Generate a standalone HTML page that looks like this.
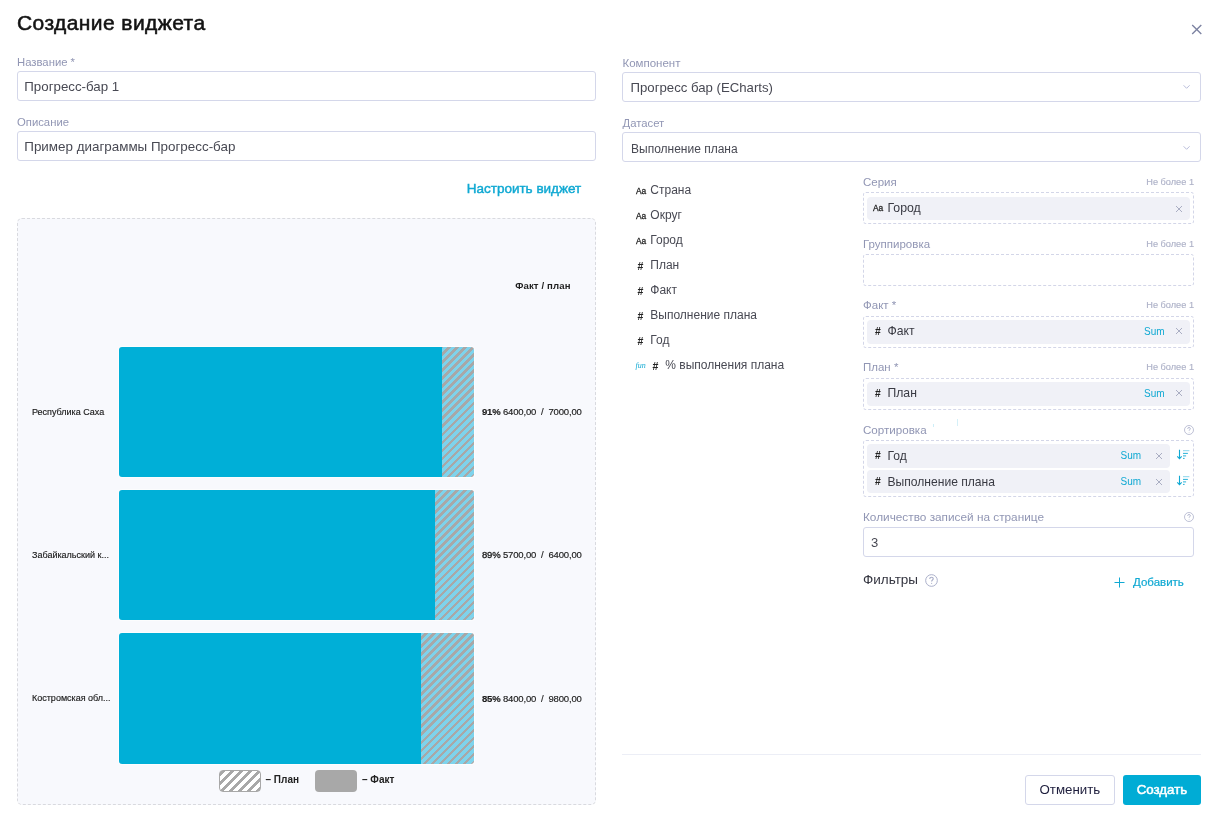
<!DOCTYPE html>
<html><head><meta charset="utf-8"><style>
html,body{margin:0;padding:0;width:1223px;height:815px;overflow:hidden;background:#fff}
body{position:relative;will-change:transform;font-family:"Liberation Sans",sans-serif}
.t{position:absolute;white-space:nowrap}
.r{position:absolute}
.bar{border-radius:3px;overflow:hidden;box-shadow:0 0 0 1px rgba(255,255,255,.6)}
</style></head><body>
<div class="t " style="left:17px;top:12.22px;font-size:21px;line-height:21px;font-weight:400;color:#131313;letter-spacing:0.42px;-webkit-text-stroke:0.55px #131313">Создание виджета</div>
<svg class="r" style="left:1189px;top:22px" width="16" height="16" viewBox="0 0 16 16"><path d="M3.2 3.0 L12.3 12.1 M12.3 3.0 L3.2 12.1" stroke="#7c82a1" stroke-width="1.35" fill="none"/></svg>
<div class="t " style="left:17px;top:56.73px;font-size:11.3px;line-height:11.3px;font-weight:400;color:#9196b4;">Название *</div>
<div class="r" style="left:17px;top:71px;width:579px;height:30px;border:1px solid #d4d7ea;border-radius:3px;box-sizing:border-box"></div>
<div class="t " style="left:24.3px;top:79.84px;font-size:13.3px;line-height:13.3px;font-weight:400;color:#484953;">Прогресс-бар 1</div>
<div class="t " style="left:17px;top:117.03px;font-size:11.3px;line-height:11.3px;font-weight:400;color:#9196b4;">Описание</div>
<div class="r" style="left:17px;top:131px;width:579px;height:30px;border:1px solid #d4d7ea;border-radius:3px;box-sizing:border-box"></div>
<div class="t " style="left:24.3px;top:139.96px;font-size:13.4px;line-height:13.4px;font-weight:400;color:#484953;">Пример диаграммы Прогресс-бар</div>
<div class="t " style="left:466.7px;top:181.87px;font-size:13.5px;line-height:13.5px;font-weight:400;color:#10a9d3;-webkit-text-stroke:0.45px #10a9d3">Настроить виджет</div>
<div class="t " style="left:622.5px;top:57.67px;font-size:11.5px;line-height:11.5px;font-weight:400;color:#9196b4;">Компонент</div>
<div class="r" style="left:622px;top:72px;width:579px;height:30px;border:1px solid #d4d7ea;border-radius:3px;box-sizing:border-box"></div>
<div class="t " style="left:630.5px;top:81.03px;font-size:13.2px;line-height:13.2px;font-weight:400;color:#484953;">Прогресс бар (ECharts)</div>
<svg class="r" style="left:1182px;top:83px" width="10" height="7" viewBox="0 0 10 7"><path d="M1.6 2.3 L4.6 5.3 L7.6 2.3" stroke="#b9bddb" stroke-width="1" fill="none"/></svg>
<div class="t " style="left:622.5px;top:117.83px;font-size:11.3px;line-height:11.3px;font-weight:400;color:#9196b4;">Датасет</div>
<div class="r" style="left:622px;top:132px;width:579px;height:30px;border:1px solid #d4d7ea;border-radius:3px;box-sizing:border-box"></div>
<div class="t " style="left:631px;top:142.64px;font-size:12px;line-height:12px;font-weight:400;color:#484953;">Выполнение плана</div>
<svg class="r" style="left:1182px;top:144px" width="10" height="7" viewBox="0 0 10 7"><path d="M1.6 2.3 L4.6 5.3 L7.6 2.3" stroke="#b9bddb" stroke-width="1" fill="none"/></svg>
<div class="t " style="left:636px;top:185.97px;font-size:9.6px;line-height:9.6px;font-weight:400;color:#222;transform:scaleX(0.87);transform-origin:0 0;-webkit-text-stroke:0.3px #222">Aa</div>
<div class="t " style="left:650.3px;top:183.84px;font-size:12px;line-height:12px;font-weight:400;color:#484953;">Страна</div>
<div class="t " style="left:636px;top:210.97px;font-size:9.6px;line-height:9.6px;font-weight:400;color:#222;transform:scaleX(0.87);transform-origin:0 0;-webkit-text-stroke:0.3px #222">Aa</div>
<div class="t " style="left:650.3px;top:208.84px;font-size:12px;line-height:12px;font-weight:400;color:#484953;">Округ</div>
<div class="t " style="left:636px;top:235.97px;font-size:9.6px;line-height:9.6px;font-weight:400;color:#222;transform:scaleX(0.87);transform-origin:0 0;-webkit-text-stroke:0.3px #222">Aa</div>
<div class="t " style="left:650.3px;top:233.84px;font-size:12px;line-height:12px;font-weight:400;color:#484953;">Город</div>
<div class="t " style="left:637.6px;top:260.81px;font-size:10.5px;line-height:10.5px;font-weight:700;color:#222;">#</div>
<div class="t " style="left:650.3px;top:258.84px;font-size:12px;line-height:12px;font-weight:400;color:#484953;">План</div>
<div class="t " style="left:637.6px;top:285.81px;font-size:10.5px;line-height:10.5px;font-weight:700;color:#222;">#</div>
<div class="t " style="left:650.3px;top:283.84px;font-size:12px;line-height:12px;font-weight:400;color:#484953;">Факт</div>
<div class="t " style="left:637.6px;top:310.81px;font-size:10.5px;line-height:10.5px;font-weight:700;color:#222;">#</div>
<div class="t " style="left:650.3px;top:308.84px;font-size:12px;line-height:12px;font-weight:400;color:#484953;">Выполнение плана</div>
<div class="t " style="left:637.6px;top:335.81px;font-size:10.5px;line-height:10.5px;font-weight:700;color:#222;">#</div>
<div class="t " style="left:650.3px;top:333.84px;font-size:12px;line-height:12px;font-weight:400;color:#484953;">Год</div>
<div class="t " style="left:635.5px;top:362.23px;font-size:8px;line-height:8px;font-weight:400;color:#10a9d3;font-style:italic;font-family:'Liberation Serif',serif">fun</div>
<div class="t " style="left:652.6px;top:360.81px;font-size:10.5px;line-height:10.5px;font-weight:700;color:#222;">#</div>
<div class="t " style="left:665.3px;top:358.84px;font-size:12px;line-height:12px;font-weight:400;color:#484953;">% выполнения плана</div>
<div class="t " style="left:863px;top:177.27px;font-size:11.5px;line-height:11.5px;font-weight:400;color:#9196b4;">Серия</div>
<div class="t " style="right:29px;top:178.11px;font-size:9.2px;line-height:9.2px;font-weight:400;color:#aeb2c8;-webkit-text-stroke:0.15px #aeb2c8">Не более 1</div>
<div class="r" style="left:863px;top:192px;width:331px;height:32px;border:1px dashed #d3d6e8;border-radius:3px;box-sizing:border-box"></div>
<div class="r" style="left:867px;top:197px;width:323px;height:23px;background:#f0f1f7;border-radius:4px"></div>
<div class="t " style="left:873px;top:203.47px;font-size:9.6px;line-height:9.6px;font-weight:400;color:#222;transform:scaleX(0.87);transform-origin:0 0;-webkit-text-stroke:0.3px #222">Aa</div>
<div class="t " style="left:887.5px;top:201.89px;font-size:12.3px;line-height:12.3px;font-weight:400;color:#393a43;">Город</div>
<svg class="r" style="left:1175px;top:205px" width="8" height="8" viewBox="0 0 8 8"><path d="M1 1 L7 7 M7 1 L1 7" stroke="#aaaec3" stroke-width="1" fill="none"/></svg>
<div class="t " style="left:863px;top:238.77px;font-size:11.5px;line-height:11.5px;font-weight:400;color:#9196b4;">Группировка</div>
<div class="t " style="right:29px;top:239.61px;font-size:9.2px;line-height:9.2px;font-weight:400;color:#aeb2c8;-webkit-text-stroke:0.15px #aeb2c8">Не более 1</div>
<div class="r" style="left:863px;top:254px;width:331px;height:32px;border:1px dashed #d3d6e8;border-radius:3px;box-sizing:border-box"></div>
<div class="t " style="left:863px;top:300.27px;font-size:11.5px;line-height:11.5px;font-weight:400;color:#9196b4;">Факт *</div>
<div class="t " style="right:29px;top:301.11px;font-size:9.2px;line-height:9.2px;font-weight:400;color:#aeb2c8;-webkit-text-stroke:0.15px #aeb2c8">Не более 1</div>
<div class="r" style="left:863px;top:316px;width:331px;height:32px;border:1px dashed #d3d6e8;border-radius:3px;box-sizing:border-box"></div>
<div class="r" style="left:867px;top:320px;width:323px;height:24px;background:#f0f1f7;border-radius:4px"></div>
<div class="t " style="left:875px;top:327.38px;font-size:10.3px;line-height:10.3px;font-weight:700;color:#222;">#</div>
<div class="t " style="left:887.5px;top:325.27px;font-size:12.2px;line-height:12.2px;font-weight:400;color:#393a43;">Факт</div>
<div class="t " style="left:1144px;top:326.54px;font-size:10px;line-height:10px;font-weight:400;color:#10a9d3;">Sum</div>
<svg class="r" style="left:1175px;top:327px" width="8" height="8" viewBox="0 0 8 8"><path d="M1 1 L7 7 M7 1 L1 7" stroke="#aaaec3" stroke-width="1" fill="none"/></svg>
<div class="t " style="left:863px;top:362.27px;font-size:11.5px;line-height:11.5px;font-weight:400;color:#9196b4;">План *</div>
<div class="t " style="right:29px;top:363.11px;font-size:9.2px;line-height:9.2px;font-weight:400;color:#aeb2c8;-webkit-text-stroke:0.15px #aeb2c8">Не более 1</div>
<div class="r" style="left:863px;top:378px;width:331px;height:32px;border:1px dashed #d3d6e8;border-radius:3px;box-sizing:border-box"></div>
<div class="r" style="left:867px;top:382px;width:323px;height:24px;background:#f0f1f7;border-radius:4px"></div>
<div class="t " style="left:875px;top:389.38px;font-size:10.3px;line-height:10.3px;font-weight:700;color:#222;">#</div>
<div class="t " style="left:887.5px;top:387.27px;font-size:12.2px;line-height:12.2px;font-weight:400;color:#393a43;">План</div>
<div class="t " style="left:1144px;top:388.54px;font-size:10px;line-height:10px;font-weight:400;color:#10a9d3;">Sum</div>
<svg class="r" style="left:1175px;top:389px" width="8" height="8" viewBox="0 0 8 8"><path d="M1 1 L7 7 M7 1 L1 7" stroke="#aaaec3" stroke-width="1" fill="none"/></svg>
<div class="t " style="left:863px;top:424.18px;font-size:11.6px;line-height:11.6px;font-weight:400;color:#9196b4;">Сортировка</div>
<svg class="r" style="left:1184px;top:425px" width="10" height="10" viewBox="0 0 20 20"><circle cx="10" cy="10" r="9" stroke="#a9aec8" stroke-width="1.5" fill="none"/><path d="M7.3 7.6 C7.3 5.9 8.5 5 10 5 C11.6 5 12.7 6 12.7 7.4 C12.7 9.2 10.2 9.4 10.2 11.4" stroke="#a9aec8" stroke-width="1.8" fill="none"/><circle cx="10.2" cy="14.3" r="0.9" fill="#a9aec8"/></svg>
<div class="r" style="left:863px;top:440px;width:331px;height:57px;border:1px dashed #d3d6e8;border-radius:3px;box-sizing:border-box"></div>
<div class="r" style="left:867px;top:444px;width:303px;height:24px;background:#f0f1f7;border-radius:4px"></div>
<div class="r" style="left:867px;top:470px;width:303px;height:23px;background:#f0f1f7;border-radius:4px"></div>
<div class="t " style="left:875px;top:451.28px;font-size:10.3px;line-height:10.3px;font-weight:700;color:#222;">#</div>
<div class="t " style="left:887.5px;top:449.66px;font-size:12.1px;line-height:12.1px;font-weight:400;color:#393a43;">Год</div>
<div class="t " style="left:1120.5px;top:450.54px;font-size:10px;line-height:10px;font-weight:400;color:#10a9d3;">Sum</div>
<svg class="r" style="left:1155px;top:451.5px" width="8" height="8" viewBox="0 0 8 8"><path d="M1 1 L7 7 M7 1 L1 7" stroke="#aaaec3" stroke-width="1" fill="none"/></svg>
<svg class="r" style="left:1176px;top:449px" width="14" height="11" viewBox="0 0 14 11"><path d="M3.5 0.8 V9.6 M1.3 7.4 L3.5 9.7 L5.7 7.4" stroke="#10a9d3" stroke-width="1.1" fill="none"/><path d="M7 1.7 H13.4" stroke="#8ad6ec" stroke-width="1"/><path d="M7 4.4 H11.9 M7 6.9 H10.1 M7 9.4 H8.6" stroke="#10a9d3" stroke-width="0.9" fill="none"/></svg>
<div class="t " style="left:875px;top:477.28px;font-size:10.3px;line-height:10.3px;font-weight:700;color:#222;">#</div>
<div class="t " style="left:887.5px;top:475.66px;font-size:12.1px;line-height:12.1px;font-weight:400;color:#393a43;">Выполнение плана</div>
<div class="t " style="left:1120.5px;top:476.54px;font-size:10px;line-height:10px;font-weight:400;color:#10a9d3;">Sum</div>
<svg class="r" style="left:1155px;top:477.5px" width="8" height="8" viewBox="0 0 8 8"><path d="M1 1 L7 7 M7 1 L1 7" stroke="#aaaec3" stroke-width="1" fill="none"/></svg>
<svg class="r" style="left:1176px;top:475px" width="14" height="11" viewBox="0 0 14 11"><path d="M3.5 0.8 V9.6 M1.3 7.4 L3.5 9.7 L5.7 7.4" stroke="#10a9d3" stroke-width="1.1" fill="none"/><path d="M7 1.7 H13.4" stroke="#8ad6ec" stroke-width="1"/><path d="M7 4.4 H11.9 M7 6.9 H10.1 M7 9.4 H8.6" stroke="#10a9d3" stroke-width="0.9" fill="none"/></svg>
<div class="t " style="left:863px;top:511.81px;font-size:11.8px;line-height:11.8px;font-weight:400;color:#9196b4;">Количество записей на странице</div>
<svg class="r" style="left:1184px;top:512px" width="10" height="10" viewBox="0 0 20 20"><circle cx="10" cy="10" r="9" stroke="#a9aec8" stroke-width="1.5" fill="none"/><path d="M7.3 7.6 C7.3 5.9 8.5 5 10 5 C11.6 5 12.7 6 12.7 7.4 C12.7 9.2 10.2 9.4 10.2 11.4" stroke="#a9aec8" stroke-width="1.8" fill="none"/><circle cx="10.2" cy="14.3" r="0.9" fill="#a9aec8"/></svg>
<div class="r" style="left:863px;top:527px;width:331px;height:30px;border:1px solid #d4d7ea;border-radius:3px;box-sizing:border-box"></div>
<div class="t " style="left:871px;top:535.60px;font-size:13px;line-height:13px;font-weight:400;color:#484953;">3</div>
<div class="t " style="left:863px;top:572.57px;font-size:13.5px;line-height:13.5px;font-weight:400;color:#33343f;">Фильтры</div>
<svg class="r" style="left:925px;top:574px" width="13" height="13" viewBox="0 0 20 20"><circle cx="10" cy="10" r="9" stroke="#a9aec8" stroke-width="1.5" fill="none"/><path d="M7.3 7.6 C7.3 5.9 8.5 5 10 5 C11.6 5 12.7 6 12.7 7.4 C12.7 9.2 10.2 9.4 10.2 11.4" stroke="#a9aec8" stroke-width="1.8" fill="none"/><circle cx="10.2" cy="14.3" r="0.9" fill="#a9aec8"/></svg>
<svg class="r" style="left:1114px;top:577px" width="12" height="12" viewBox="0 0 12 12"><path d="M5.5 0.5 V10.5 M0.5 5.5 H10.5" stroke="#10a9d3" stroke-width="1" fill="none"/></svg>
<div class="t " style="left:1133px;top:577.27px;font-size:11.5px;line-height:11.5px;font-weight:400;color:#10a9d3;-webkit-text-stroke:0.2px #10a9d3">Добавить</div>
<div class="r" style="left:622px;top:754px;width:579px;height:1px;background:#eceef6"></div>
<div class="r" style="left:1025px;top:775px;width:90px;height:30px;border:1px solid #d4d7ea;border-radius:3px;box-sizing:border-box;background:#fff"></div>
<div class="t " style="left:1039.5px;top:783.14px;font-size:13.3px;line-height:13.3px;font-weight:400;color:#1d1d3c;">Отменить</div>
<div class="r" style="left:1123px;top:775px;width:78px;height:30px;background:#00acd5;border-radius:3px"></div>
<div class="t " style="left:1136.7px;top:783.24px;font-size:13.3px;line-height:13.3px;font-weight:400;color:#ffffff;-webkit-text-stroke:0.5px #fff">Создать</div>
<div class="r" style="left:17px;top:218px;width:579px;height:587px;border:1px dashed #d9dadf;border-radius:5px;box-sizing:border-box;background:#f8f9fd"></div>
<div class="t " style="left:515.2px;top:280.87px;font-size:9.6px;line-height:9.6px;font-weight:700;color:#1f1f1f;letter-spacing:0.12px">Факт / план</div>
<div class="r bar" style="left:119px;top:347px;width:355px;height:130px"><div style="position:absolute;left:0;top:0;bottom:0;width:323px;background:#00afd7"></div><div style="position:absolute;left:323px;top:0;bottom:0;right:0;background:repeating-linear-gradient(-45deg,#a8a8a8 0 2.8px,#7ed3ec 2.8px 5.66px)"></div></div>
<div class="t " style="left:32px;top:407.58px;font-size:9px;line-height:9px;font-weight:400;color:#1a1a1a;-webkit-text-stroke:0.15px #1a1a1a">Республика Саха</div>
<div class="t " style="left:482px;top:407.16px;font-size:9.5px;line-height:9.5px;font-weight:400;color:#1a1a1a;-webkit-text-stroke:0.15px #1a1a1a;letter-spacing:-0.17px"><b>91%</b> 6400,00 &nbsp;/ &nbsp;7000,00</div>
<div class="r bar" style="left:119px;top:490px;width:355px;height:130px"><div style="position:absolute;left:0;top:0;bottom:0;width:316px;background:#00afd7"></div><div style="position:absolute;left:316px;top:0;bottom:0;right:0;background:repeating-linear-gradient(-45deg,#a8a8a8 0 2.8px,#7ed3ec 2.8px 5.66px)"></div></div>
<div class="t " style="left:32px;top:550.58px;font-size:9px;line-height:9px;font-weight:400;color:#1a1a1a;-webkit-text-stroke:0.15px #1a1a1a">Забайкальский к...</div>
<div class="t " style="left:482px;top:550.16px;font-size:9.5px;line-height:9.5px;font-weight:400;color:#1a1a1a;-webkit-text-stroke:0.15px #1a1a1a;letter-spacing:-0.17px"><span style='-webkit-text-stroke:0.3px #1a1a1a'>89%</span> 5700,00 &nbsp;/ &nbsp;6400,00</div>
<div class="r bar" style="left:119px;top:633px;width:355px;height:131px"><div style="position:absolute;left:0;top:0;bottom:0;width:302px;background:#00afd7"></div><div style="position:absolute;left:302px;top:0;bottom:0;right:0;background:repeating-linear-gradient(-45deg,#a8a8a8 0 2.8px,#7ed3ec 2.8px 5.66px)"></div></div>
<div class="t " style="left:32px;top:694.08px;font-size:9px;line-height:9px;font-weight:400;color:#1a1a1a;-webkit-text-stroke:0.15px #1a1a1a">Костромская обл...</div>
<div class="t " style="left:482px;top:693.66px;font-size:9.5px;line-height:9.5px;font-weight:400;color:#1a1a1a;-webkit-text-stroke:0.15px #1a1a1a;letter-spacing:-0.17px"><b>85%</b> 8400,00 &nbsp;/ &nbsp;9800,00</div>
<div class="r" style="left:933px;top:424px;width:1px;height:3px;background:#cdeef8"></div><div class="r" style="left:957px;top:419px;width:1px;height:7px;background:#d5f0f8"></div>
<div class="r" style="left:219px;top:770.2px;width:42px;height:21.4px;box-sizing:border-box;border:1px solid #a8a8a8;border-radius:4px;background:repeating-linear-gradient(-45deg,#a8a8a8 0 3px,#fff 3px 6.4px)"></div>
<div class="t " style="left:265.5px;top:774.83px;font-size:10px;line-height:10px;font-weight:700;color:#222;">– План</div>
<div class="r" style="left:315px;top:770.2px;width:42px;height:21.4px;background:#a8a8a8;border-radius:4px"></div>
<div class="t " style="left:362px;top:774.83px;font-size:10px;line-height:10px;font-weight:700;color:#222;">– Факт</div>
</body></html>
